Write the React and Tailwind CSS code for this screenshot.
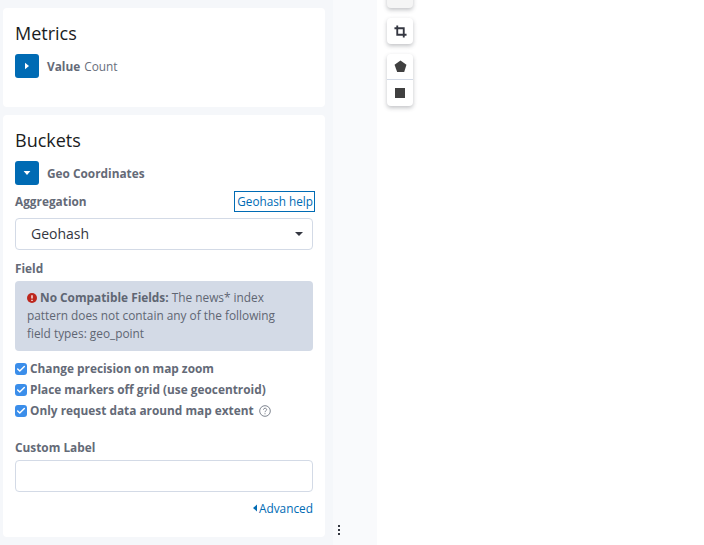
import { Check } from "lucide-react";

const Caret = ({ dir }) => (
  <svg viewBox="0 0 8 8" className="w-2 h-2 fill-white">
    {dir === "right" ? <path d="M2 .8 6 4 2 7.2z" /> : <path d="M.6 2h6.8L4 6z" />}
  </svg>
);

const Toggle = ({ dir }) => (
  <div className="w-6 h-6 rounded-[3px] bg-[#006bb4] flex items-center justify-center shrink-0">
    <Caret dir={dir} />
  </div>
);

const CheckRow = ({ label, help }) => (
  <div className="flex items-center h-[21px]">
    <div className="w-3 h-3 rounded-[3px] bg-[#3b8eea] flex items-center justify-center shrink-0">
      <Check className="w-2.5 h-2.5 text-white" strokeWidth={3.5} />
    </div>
    <span className="ml-[3px] text-[11.85px] font-bold text-[#646a77]">{label}</span>
    {help && (
      <svg viewBox="0 0 14 14" className="w-3 h-3 ml-[5px] mt-[1px]" fill="none" stroke="#69707d" strokeWidth="1">
        <circle cx="7" cy="7" r="6.2" />
        <path d="M5.2 5.5C5.2 3.2 8.9 3.2 8.9 5.4 8.9 6.8 7 6.8 7 8.4" />
        <path d="M7 9.6v1.2" />
      </svg>
    )}
  </div>
);

export default function App() {
  return (
    <div className="flex w-[704px] h-[545px] overflow-hidden bg-white font-['Open_Sans',sans-serif]">
      {/* Left editor panel */}
      <div className="w-[333px] h-full shrink-0 bg-[#f5f7fa] pl-[3px] pr-2 pt-2 flex flex-col gap-2">
        <section className="h-[99px] bg-white rounded-[4px] px-3 pt-[13px]">
          <h2 className="text-[18px] leading-6 text-[#1a1c21]">Metrics</h2>
          <div className="flex items-center mt-[9px] text-[11.85px]">
            <Toggle dir="right" />
            <span className="ml-2 pt-[2px] font-bold text-[#646a77]">Value</span>
            <span className="ml-1 pt-[2px] text-[#69707d]">Count</span>
          </div>
        </section>

        <section className="h-[422px] bg-white rounded-[4px] pl-3 pr-[10px] pt-[13px]">
          <h2 className="text-[18px] leading-6 text-[#1a1c21]">Buckets</h2>
          <div className="flex items-center mt-[9px]">
            <Toggle dir="down" />
            <span className="ml-2 pt-[2px] text-[11.85px] font-bold text-[#646a77]">Geo Coordinates</span>
          </div>

          <div className="flex items-center justify-between mt-[6px] h-[20px]">
            <span className="pt-[2px] text-[11.85px] font-bold text-[#646a77]">Aggregation</span>
            <span className="h-[21px] w-[81px] text-right border border-[#006bb4] pr-[1px] text-[11.75px] leading-[19px] text-[#006bb4]">Geohash help</span>
          </div>

          <div className="mt-[7px] mr-[2px] h-8 rounded-[4px] border border-[#d3dae6] flex items-center justify-between pl-[15px] pr-[9px]">
            <span className="pb-[2px] text-[14px] text-[#343741]">Geohash</span>
            <svg viewBox="0 0 8 4" className="w-2 h-1 fill-[#343741]"><path d="M0 0h8L4 4z" /></svg>
          </div>

          <div className="mt-[10px] text-[11.85px] leading-4 font-bold text-[#646a77]">Field</div>
          <div className="mt-[5px] mr-[2px] h-[70px] rounded-[4px] bg-[#d3dae6] px-3 pt-[7px] text-[11.85px] leading-[18px] text-[#5f6673]">
            <svg viewBox="0 0 12 12" className="inline-block w-[10px] h-[10px] mr-[3px] align-[-1px]">
              <circle cx="6" cy="6" r="6" fill="#bd271e" />
              <path d="M6 2.6v4M6 8.2v1.3" stroke="#fff" strokeWidth="1.6" />
            </svg>
            <b className="font-bold">No Compatible Fields:</b> The news* index pattern does not contain any of the following field types: geo_point
          </div>

          <div className="mt-[7px]">
            <CheckRow label="Change precision on map zoom" />
            <CheckRow label="Place markers off grid (use geocentroid)" />
            <CheckRow label="Only request data around map extent" help />
          </div>

          <div className="mt-[18px] text-[11.85px] leading-4 font-bold text-[#646a77]">Custom Label</div>
          <div className="mt-[5px] mr-[2px] h-8 rounded-[4px] border border-[#d3dae6] bg-white" />
          <div className="mt-[8px] mr-[2px] flex items-center justify-end gap-[2px] text-[11.85px] leading-4 text-[#006bb4]">
            <svg viewBox="0 0 4 8" className="w-1 h-2 fill-[#006bb4]"><path d="M4 .6v6.8L0 4z" /></svg>
            Advanced
          </div>
        </section>
      </div>

      {/* Resize strip */}
      <div className="w-[44px] h-full shrink-0 bg-[#f9fafc] relative">
        <div className="absolute left-[5px] top-[525px] flex flex-col gap-[2px]">
          <span className="w-[2px] h-[2px] bg-[#343741]" />
          <span className="w-[2px] h-[2px] bg-[#343741]" />
          <span className="w-[2px] h-[2px] bg-[#343741]" />
        </div>
      </div>

      {/* Map */}
      <div className="flex-1 h-full relative bg-white">
        <div className="absolute left-[10px] -top-[18px] flex flex-col">
          <div className="w-[26px] h-[26px] rounded-[4px] bg-[#f5f5f5] shadow-[0_2px_4px_rgba(52,55,65,0.3)]" />
          <div className="mt-[10px] w-[26px] h-[26px] rounded-[4px] bg-white shadow-[0_2px_4px_rgba(52,55,65,0.3)] flex items-center justify-center">
            <svg viewBox="0 0 14 14" className="w-[13px] h-[13px]" fill="none" stroke="#343741" strokeWidth="2">
              <path d="M3.5 0.5V10.5H13.5" />
              <path d="M0.5 3.5H10.5V13.5" />
            </svg>
          </div>
          <div className="mt-[10px] w-[26px] rounded-[4px] bg-white shadow-[0_2px_4px_rgba(52,55,65,0.3)] flex flex-col">
            <div className="h-[26px] flex items-center justify-center border-b border-[#d3dae6]">
              <svg viewBox="0 0 14 14" className="w-[13px] h-[13px] fill-[#404040]"><path d="M7 .6 13.4 5 11 13H3.4L.6 5z" /></svg>
            </div>
            <div className="h-[26px] flex items-center justify-center">
              <div className="w-[10px] h-[10px] bg-[#404040]" />
            </div>
          </div>
        </div>
      </div>
    </div>
  );
}
